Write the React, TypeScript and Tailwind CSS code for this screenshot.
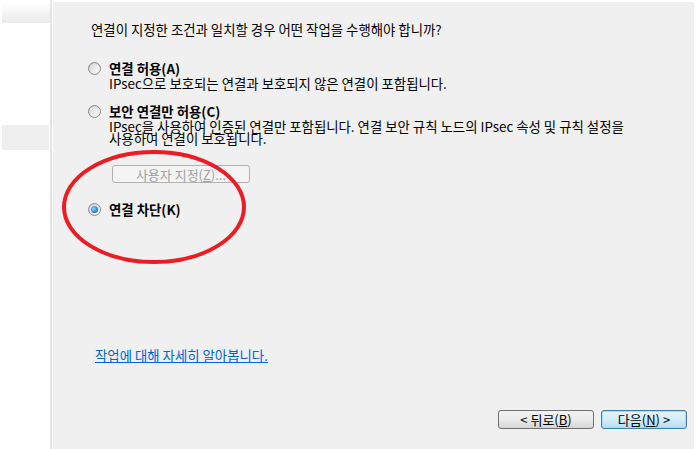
import React from "react";

const font = { fontFamily: '"Noto Sans CJK KR", "Liberation Sans", sans-serif' };

function Radio({ checked }: { checked?: boolean }) {
  return (
    <div className="w-[13px] h-[13px] rounded-full border border-[#8a8a8a] bg-gradient-to-br from-[#c8c8c8] to-[#ffffff] flex items-center justify-center shrink-0">
      <div className="w-[9px] h-[9px] rounded-full bg-gradient-to-br from-[#dcdcdc] to-[#f8f8f8] flex items-center justify-center">
        {checked && (
          <div className="w-[7px] h-[7px] rounded-full bg-[radial-gradient(circle_at_40%_40%,#8fd6ff,#1a73c9_70%,#0d4f96)]" />
        )}
      </div>
    </div>
  );
}

function Option({ label, hotkey, checked }: { label: string; hotkey: string; checked?: boolean }) {
  return (
    <div className="flex items-center gap-[8px] h-[13px]">
      <Radio checked={checked} />
      <span className="text-[13.4px] leading-[13px] font-bold text-black">
        {label}({hotkey})
      </span>
    </div>
  );
}

export default function App() {
  return (
    <div className="w-[696px] h-[449px] bg-white flex overflow-hidden text-black" style={font}>
      {/* left nav strip */}
      <div className="w-[50px] pt-[2px] pl-[2px] flex flex-col">
        <div className="h-[21px] bg-gradient-to-b from-[#ffffff] to-[#ebebeb]" />
        <div className="mt-[102px] h-[25px] w-[47px] bg-[#efefef]" />
      </div>
      <div className="w-[2px] bg-[#e4e4e4]" />
      <div className="w-[1px]" />

      {/* wizard page */}
      <div className="mt-[2px] w-[641px] h-[447px] bg-[#f0f0f0] flex flex-col pl-[35px] pr-[7px] pt-[21px] pb-[20px] relative">
        <div className="ml-[3px] text-[13.4px] leading-[13px]">
          연결이 지정한 조건과 일치할 경우 어떤 작업을 수행해야 합니까?
        </div>

        <div className="mt-[26px]">
          <Option label="연결 허용" hotkey="A" />
        </div>
        <div className="mt-[2px] ml-[21px] text-[13.4px] leading-[13px]">
          IPsec으로 보호되는 연결과 보호되지 않은 연결이 포함됩니다.
        </div>

        <div className="mt-[15px]">
          <Option label="보안 연결만 허용" hotkey="C" />
        </div>
        <div className="mt-[2px] ml-[21px] text-[13.4px] leading-[12px]">
          <div>IPsec을 사용하여 인증된 연결만 포함됩니다. 연결 보안 규칙 노드의 IPsec 속성 및 규칙 설정을</div>
          <div>사용하여 연결이 보호됩니다.</div>
        </div>

        <button
          disabled
          className="mt-[21px] ml-[24px] w-[138px] h-[18px] rounded-[3px] border border-[#adb2b5] bg-[#f4f4f4] text-[13px] leading-[13px] text-[#a0a0a0] flex items-center justify-center"
        >
          사용자 지정(<span className="underline">Z</span>)...
        </button>

        <div className="mt-[20px]">
          <Option label="연결 차단" hotkey="K" checked />
        </div>

        <a className="mt-[133px] ml-[7px] text-[13.4px] leading-[13px] text-[#0066cc] underline w-fit">
          작업에 대해 자세히 알아봅니다.
        </a>

        <div className="mt-auto flex justify-end gap-[7px]">
          <button className="w-[96px] h-[19px] rounded-[3px] border border-[#707070] bg-gradient-to-b from-[#f2f2f2] via-[#ebebeb] to-[#d6d6d6] text-[13px] leading-[13px] flex items-center justify-center">
            &lt; 뒤로(<span className="underline">B</span>)
          </button>
          <button className="w-[86px] h-[19px] rounded-[3px] border border-[#3c7fb1] bg-gradient-to-b from-[#e5f4fc] via-[#d4ecfa] to-[#b6dcf2] text-[13px] leading-[13px] flex items-center justify-center shadow-[inset_0_0_0_1px_#a6dcf8]">
            다음(<span className="underline">N</span>) &gt;
          </button>
        </div>

        {/* red annotation ellipse drawn over the dialog */}
        <svg className="absolute left-[9px] top-[145px]" width="186" height="118" viewBox="0 0 186 118">
          <ellipse cx="92" cy="60" rx="90" ry="55" fill="none" stroke="#ed1c24" strokeWidth="4" />
        </svg>
      </div>
      <div className="flex-1" />
    </div>
  );
}
